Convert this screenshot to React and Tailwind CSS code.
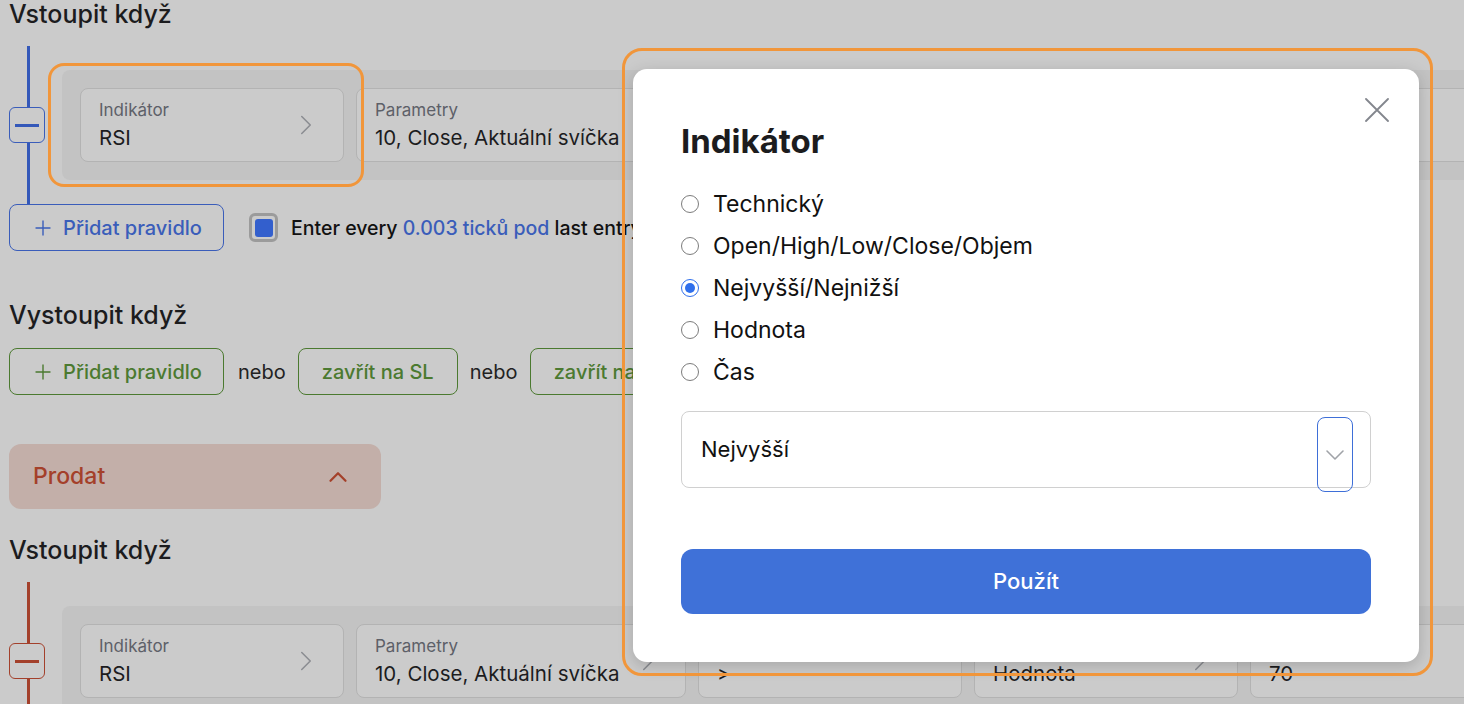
import { Plus, ChevronRight, ChevronDown, ChevronUp } from "lucide-react";

const FONT = "font-['Inter',sans-serif]";

function CardText({ label, value }) {
  return (
    <div className="flex flex-col">
      <div className="text-[17px] leading-[20px] text-[#5d6068]">{label}</div>
      <div className="mt-[6px] whitespace-nowrap text-[20.5px] leading-[24px] text-[#1c1c1e]">{value}</div>
    </div>
  );
}

function Card({ label, value, icon = "right", width = "w-[264px]" }) {
  return (
    <div className={`flex h-[74px] ${width} shrink-0 items-center justify-between rounded-[8px] border border-[#b3b3b3] bg-[#cbcbcb] pl-[18px] pr-[20px]`}>
      <CardText label={label} value={value} />
      {icon === "right" ? (
        <ChevronRight className="h-[34px] w-[34px] text-[#8b8d92]" strokeWidth={1.1} />
      ) : (
        <ChevronDown className="mb-[16px] mr-[8px] h-[16px] w-[16px] text-[#8b8d92]" strokeWidth={2} />
      )}
    </div>
  );
}

function RuleBlock({ tone, compare, amount }) {
  const line = tone === "blue" ? "bg-[#3458b9]" : "bg-[#a3402b]";
  const border = tone === "blue" ? "border-[#3a5dba]" : "border-[#a3402b]";
  return (
    <div className="flex">
      {/* connector + remove button */}
      <div className="flex w-[36px] shrink-0 flex-col items-center">
        <div className={`ml-[2px] w-[3px] flex-1 ${line}`} />
        <div className={`flex h-[36px] w-[36px] items-center justify-center rounded-[6px] border ${border}`}>
          <div className={`h-[3px] w-[24px] ${line}`} />
        </div>
        <div className={`ml-[2px] w-[3px] flex-1 ${line}`} />
      </div>
      <div className="ml-[17px] py-[24px]">
        <div className="flex gap-[12px] rounded-l-[8px] bg-[#c3c3c3] p-[18px]">
          <Card label="Indikátor" value="RSI" />
          <Card label="Parametry" value="10, Close, Aktuální svíčka" width="w-[330px]" />
          <Card label="Porovnání" value={compare} icon="down" />
          <Card label="Typ" value="Hodnota" />
          <Card label="Hodnota" value={amount} />
        </div>
      </div>
    </div>
  );
}

function AddRule({ tone }) {
  const cls =
    tone === "blue"
      ? "border-[#3a5dba] text-[#3a5dba]"
      : "border-[#4b7a30] text-[#4b7a30]";
  return (
    <button className={`flex h-[47px] w-[215px] items-center justify-center gap-[8px] rounded-[8px] border text-[20px] font-medium ${cls}`}>
      <Plus className="h-[24px] w-[24px]" strokeWidth={1.4} />
      Přidat pravidlo
    </button>
  );
}

function Radio({ label, checked }) {
  return (
    <div className="flex h-[42px] items-center gap-[14px]">
      {checked ? (
        <span className="flex h-[18px] w-[18px] items-center justify-center rounded-full border-[1.5px] border-[#2f6fec]">
          <span className="h-[10px] w-[10px] rounded-full bg-[#2f6fec]" />
        </span>
      ) : (
        <span className="h-[18px] w-[18px] rounded-full border-[1.5px] border-[#7c7c7c]" />
      )}
      <span className="text-[23px] text-[#111]">{label}</span>
    </div>
  );
}

export default function App() {
  return (
    <div className={`relative h-[704px] w-[1464px] overflow-hidden bg-[#cbcbcb] ${FONT}`}>
      <div className="pl-[9px]">
        <h2 className="text-[25px] font-medium leading-[28px] text-[#1c1c1e]">Vstoupit když</h2>
        <div className="mt-[18px]">
          <RuleBlock tone="blue" compare="<" amount="30" />
        </div>
        <div className="flex items-center">
          <AddRule tone="blue" />
          <div className="ml-[25px] flex h-[29px] w-[29px] items-center justify-center rounded-[6px] border-[3px] border-[#9b9b9b]">
            <div className="h-[18px] w-[18px] rounded-[3px] bg-[#335fcd]" />
          </div>
          <div className="ml-[13px] mt-[2px] whitespace-nowrap text-[19.5px] font-medium text-[#111]">
            Enter every <span className="text-[#3a5dba]">0.003 ticků pod</span> last entry
          </div>
        </div>

        <h2 className="mt-[50px] text-[25px] font-medium leading-[28px] text-[#1c1c1e]">Vystoupit když</h2>
        <div className="mt-[19px] flex items-center">
          <AddRule tone="green" />
          <span className="ml-[14px] text-[20px] text-[#222]">nebo</span>
          <button className="ml-[12px] h-[47px] w-[160px] rounded-[8px] border border-[#4b7a30] text-[20px] font-medium text-[#4b7a30]">
            zavřít na SL
          </button>
          <span className="ml-[12px] text-[20px] text-[#222]">nebo</span>
          <button className="ml-[13px] h-[47px] w-[160px] rounded-[8px] border border-[#4b7a30] text-[20px] font-medium text-[#4b7a30]">
            zavřít na TP
          </button>
        </div>

        <div className="mt-[49px] flex h-[65px] w-[372px] items-center justify-between rounded-[12px] bg-[#c3afa9] pl-[24px] pr-[28px]">
          <span className="text-[23px] font-medium text-[#a4402a]">Prodat</span>
          <ChevronUp className="h-[30px] w-[30px] text-[#a4402a]" strokeWidth={1.8} />
        </div>

        <h2 className="mt-[27px] text-[25px] font-medium leading-[28px] text-[#1c1c1e]">Vstoupit když</h2>
        <div className="mt-[18px]">
          <RuleBlock tone="red" compare=">" amount="70" />
        </div>
      </div>

      {/* highlight around indicator card */}
      <div className="absolute left-[48px] top-[63px] h-[124px] w-[316px] rounded-[16px] border-[3px] border-[#f1963b]" />

      {/* modal */}
      <div className="absolute left-[633px] top-[69px] flex h-[593px] w-[786px] flex-col rounded-[14px] bg-white px-[48px] pt-[52px] shadow-[0_4px_16px_rgba(0,0,0,0.18)]">
        <button className="absolute right-[30px] top-[29px] text-[#83868d]">
          <svg width="24" height="24" viewBox="0 0 24 24" fill="none" stroke="currentColor" strokeWidth="1.8" strokeLinecap="round">
            <path d="M1 1L23 23M23 1L1 23" />
          </svg>
        </button>
        <h1 className="text-[33px] font-bold leading-[40px] text-[#1c1c1e]">Indikátor</h1>
        <div className="mt-[22px] flex flex-col">
          <Radio label="Technický" />
          <Radio label="Open/High/Low/Close/Objem" />
          <Radio label="Nejvyšší/Nejnižší" checked />
          <Radio label="Hodnota" />
          <Radio label="Čas" />
        </div>
        <div className="relative mt-[18px] flex h-[77px] items-center rounded-[8px] border border-[#d0d0d0] pl-[19px]">
          <span className="text-[22px] text-[#111]">Nejvyšší</span>
          <div className="absolute right-[17px] top-[5px] flex h-[75px] w-[36px] items-center justify-center rounded-[8px] border border-[#3e6fd8]">
            <ChevronDown className="h-[32px] w-[32px] text-[#a0a3a8]" strokeWidth={1.2} />
          </div>
        </div>
        <button className="mt-[61px] h-[65px] rounded-[12px] bg-[#3f71d8] text-[22px] font-medium text-white">
          Použít
        </button>
      </div>

      {/* highlight around modal */}
      <div className="absolute left-[622px] top-[48px] h-[628px] w-[811px] rounded-[20px] border-[3px] border-[#f1963b]" />
    </div>
  );
}
